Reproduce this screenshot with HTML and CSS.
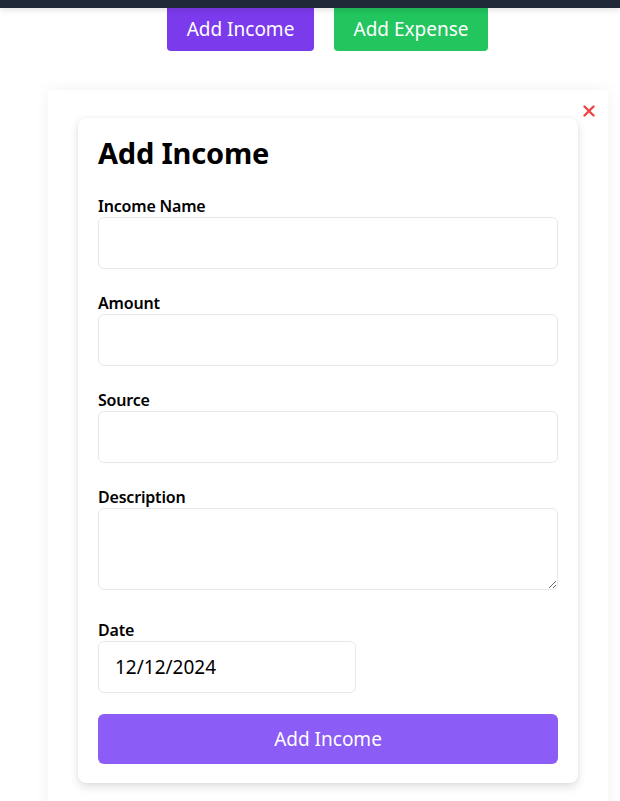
FILE: index.html
```html
<!DOCTYPE html>
<html lang="en">
<head>
<meta charset="utf-8">
<title>Add Income</title>
<link rel="stylesheet" href="styles.css">
</head>
<body>
<div class="topbar"></div>
<div class="actions">
  <button class="btn btn-income">Add Income</button>
  <button class="btn btn-expense">Add Expense</button>
</div>
<div class="modal">
  <button class="close" aria-label="Close">
    <svg width="12" height="12" viewBox="0 0 12 12"><path d="M1.5 1.5 L10.5 10.5 M10.5 1.5 L1.5 10.5" stroke="#ef4444" stroke-width="2.4" stroke-linecap="round"/></svg>
  </button>
  <form class="card">
    <h2 class="title">Add Income</h2>
    <div class="field">
      <label class="label">Income Name</label>
      <input class="input" type="text">
    </div>
    <div class="field">
      <label class="label">Amount</label>
      <input class="input" type="text">
    </div>
    <div class="field">
      <label class="label">Source</label>
      <input class="input" type="text">
    </div>
    <div class="field field-desc">
      <label class="label">Description</label>
      <textarea class="input textarea"></textarea>
    </div>
    <div class="field field-date">
      <label class="label">Date</label>
      <div class="input date">12/12/2024</div>
    </div>
    <button type="button" class="submit">Add Income</button>
  </form>
</div>
</body>
</html>
```
FILE: styles.css
```css
* { box-sizing: border-box; }
html, body { margin: 0; padding: 0; background: #ffffff; }
body {
  font-family: "Noto Sans", "Open Sans", sans-serif;
  color: #000;
  overflow: hidden;
}
.topbar {
  height: 8px;
  background: #1f2937;
  position: relative;
  z-index: 2;
  box-shadow: 0 2px 6px rgba(0,0,0,0.12);
}
.actions {
  display: flex;
  justify-content: center;
  gap: 20px;
  margin-top: -4px;
  padding-left: 35px;
}
.btn {
  border: none;
  border-radius: 4px;
  color: #fff;
  font-family: inherit;
  font-size: 19px;
  height: 47px;
  padding: 0 19px;
  line-height: 1;
  padding-top: 3px;
}
.btn-income { background: #7c3aed; width: 147px; }
.btn-expense { background: #22c55e; width: 154px; }
.modal {
  position: relative;
  margin: 39px 12px 0 48px;
  background: #fff;
  box-shadow: 0 0 14px rgba(0,0,0,0.06);
  padding: 28px 30px 40px 30px;
}
.close {
  position: absolute;
  top: 15px;
  right: 13px;
  background: none;
  border: none;
  padding: 0;
  width: 12px;
  height: 12px;
  display: block;
}
.close svg { display: block; }
.card {
  width: 500px;
  background: #fff;
  border-radius: 8px;
  box-shadow: 0 4px 10px rgba(0,0,0,0.12), 0 0 3px rgba(0,0,0,0.06);
  padding: 17px 20px 19px;
  display: flex;
  flex-direction: column;
}
.title {
  margin: 0 0 24px;
  font-size: 29px;
  font-weight: 700;
  line-height: 36px;
  letter-spacing: -0.2px;
}
.field {
  display: flex;
  flex-direction: column;
  margin-bottom: 23px;
}
.label {
  font-size: 16px;
  font-weight: 600;
  line-height: 22px;
  letter-spacing: -0.2px;
}
.input {
  width: 460px;
  height: 52px;
  border: 1px solid #e5e7eb;
  border-radius: 6px;
  background: #fff;
  font-family: inherit;
  font-size: 18px;
  margin: 0;
}
.textarea {
  height: 82px;
  resize: vertical;
}
.field-desc { margin-bottom: 29px; }
.field-date { margin-bottom: 21px; }
.date {
  width: 258px;
  display: flex;
  align-items: center;
  padding-left: 16px;
  font-size: 19px;
  color: #000;
}
.submit {
  width: 460px;
  height: 50px;
  border: none;
  border-radius: 6px;
  background: #8b5cf6;
  color: #fff;
  font-family: inherit;
  font-size: 19px;
}
```
